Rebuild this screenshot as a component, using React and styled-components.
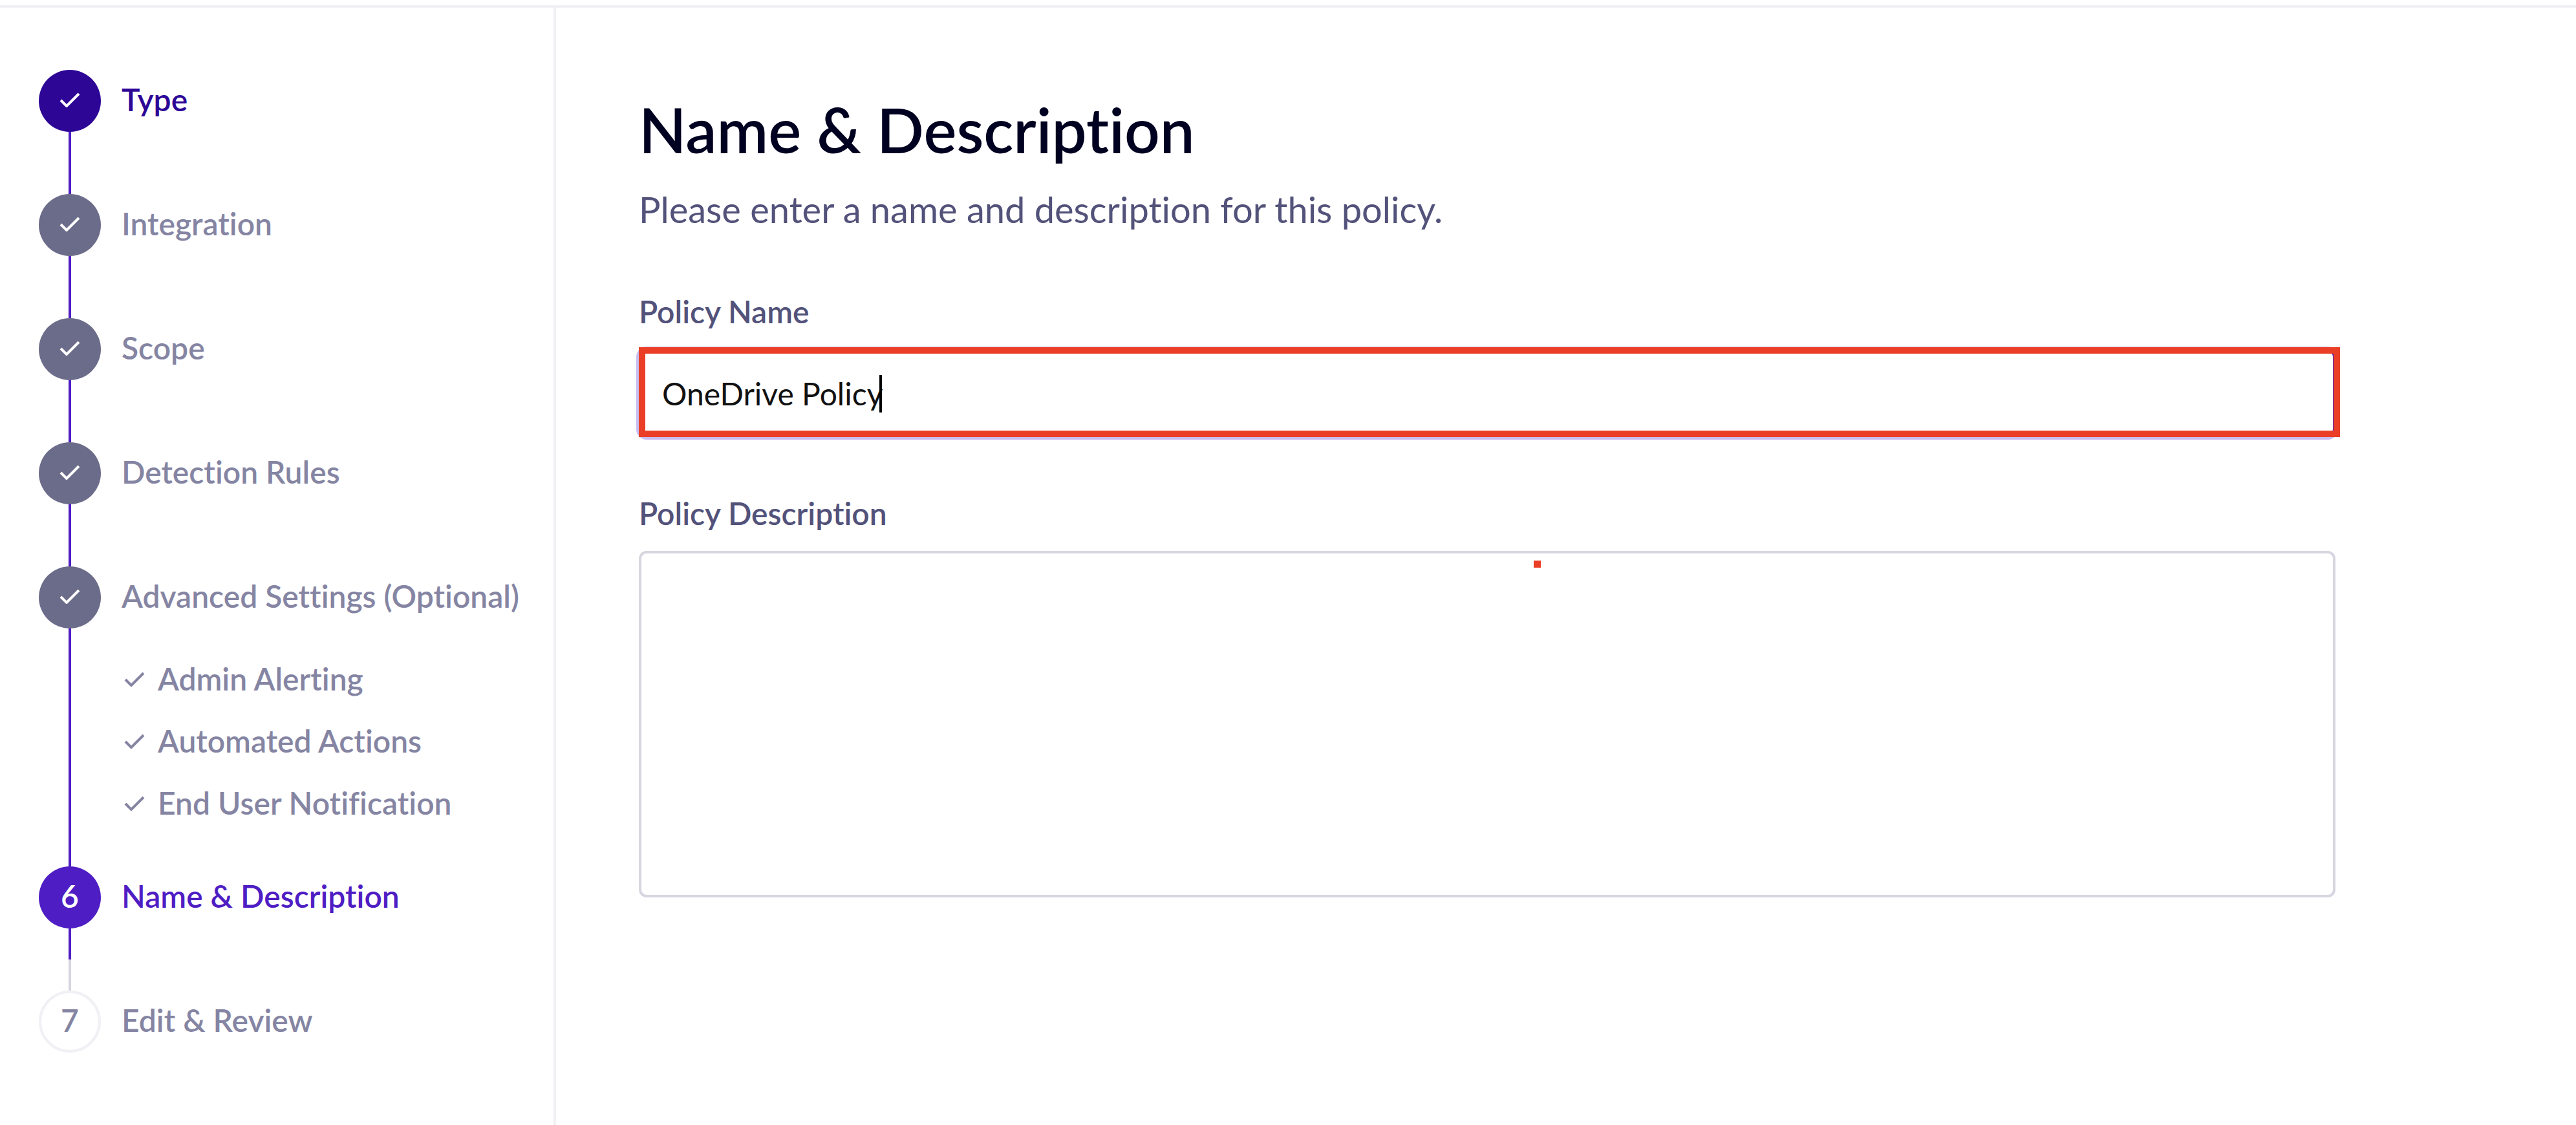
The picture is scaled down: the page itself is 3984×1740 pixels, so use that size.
import React, { useState } from "react";
import styled, { createGlobalStyle, css } from "styled-components";

const GlobalStyle = createGlobalStyle`
  *, *::before, *::after { box-sizing: border-box; }
  body {
    margin: 0;
    background: #ffffff;
    color: #000020;
    font-family: Lato, "Open Sans", sans-serif;
    font-variant-ligatures: none;
    -webkit-font-smoothing: antialiased;
  }
`;

const Page = styled.div`
  display: flex;
  flex-direction: column;
  min-height: 100vh;
  padding-top: 8px;
`;

const Wizard = styled.div`
  display: flex;
  flex: 1;
  border-top: 4px solid #f0f0f5;
`;

const Sidebar = styled.nav`
  flex: none;
  width: 860px;
  padding: 96px 0 96px 60px;
  border-right: 4px solid #f0f0f5;
`;

const StepList = styled.ol`
  margin: 0;
  padding: 0;
  list-style: none;
`;

const Step = styled.li`
  display: flex;
  gap: 32px;
`;

const Rail = styled.div`
  display: flex;
  flex: none;
  flex-direction: column;
  align-items: center;
  width: 96px;
`;

const tones = {
  first: css`background: #2d0696; color: #ffffff;`,
  done: css`background: #6b6b8a; color: #ffffff;`,
  current: css`background: #4f1dc4; color: #ffffff;`,
  upcoming: css`background: #ffffff; color: #8585a3; border: 4px solid #f0f0f5;`,
};

const Marker = styled.span`
  display: flex;
  flex: none;
  align-items: center;
  justify-content: center;
  width: 96px;
  height: 96px;
  padding-bottom: 4px;
  border-radius: 50%;
  font-size: 48px;
  font-weight: 600;
  line-height: 60px;
  ${({ $tone }) => tones[$tone]}
`;

const Connector = styled.span`
  flex: 1;
  width: 4px;
  min-height: 96px;
  background: ${({ $half }) =>
    $half ? "linear-gradient(#4f1dc4 50%, #d6d6e0 50%)" : "#4f1dc4"};
`;

const labelColors = {
  first: "#2d0696",
  done: "#8585a3",
  current: "#4f1dc4",
  upcoming: "#8585a3",
};

const StepLink = styled.a`
  display: flex;
  align-items: center;
  height: 96px;
  padding-bottom: 4px;
  color: ${({ $tone }) => labelColors[$tone]};
  font-size: 48px;
  font-weight: 600;
  line-height: 60px;
  text-decoration: none;
  white-space: nowrap;
`;

const SubList = styled.ul`
  margin: 0;
  padding: 32px 0 48px;
  list-style: none;
`;

const SubLink = styled(StepLink)`
  gap: 20px;
  padding-left: 4px;
`;

const Icon = styled.svg`
  flex: none;
  width: 32px;
  height: 24px;
`;

const Main = styled.main`
  flex: 1;
  padding: 128px;
`;

const Form = styled.form`
  max-width: 2624px;
`;

const Title = styled.h1`
  margin: 0;
  font-size: 96px;
  font-weight: 600;
  line-height: 120px;
`;

const Intro = styled.p`
  margin: 24px 0 0;
  color: #52527a;
  font-size: 56px;
  line-height: 80px;
`;

const Field = styled.div`
  display: flex;
  flex-direction: column;
  gap: 28px;
  margin-top: 88px;
`;

const Label = styled.label`
  color: #52527a;
  font-size: 48px;
  font-weight: 600;
  line-height: 60px;
`;

const Control = styled.div`
  position: relative;
  display: flex;
`;

const controlStyle = css`
  width: 100%;
  margin: 0;
  padding: 0 32px;
  border-radius: 12px;
  background: #ffffff;
  color: #111111;
  font-family: inherit;
  font-size: 48px;
  font-variant-ligatures: none;
  line-height: 60px;
  outline: none;
`;

const TextInput = styled.input`
  ${controlStyle}
  height: 136px;
  border: 4px solid #4f1dc4;
  box-shadow: 0 0 0 4px #c9bdee;
`;

const TextArea = styled.textarea`
  ${controlStyle}
  height: 536px;
  padding: 32px;
  border: 4px solid #d6d6e0;
  resize: none;
`;

const Caret = styled.span`
  position: absolute;
  top: 40px;
  left: 372px;
  width: 4px;
  height: 58px;
  background: #000000;
`;

const Highlight = styled.span`
  position: absolute;
  inset: -3px -7px 0 0;
  border: 10px solid #ea3f26;
  pointer-events: none;
`;

const Dot = styled.span`
  position: absolute;
  top: 15px;
  left: 1384px;
  width: 11px;
  height: 11px;
  background: #ea3f26;
  pointer-events: none;
`;

function Check() {
  return (
    <Icon viewBox="0 0 32 24" aria-hidden="true">
      <path
        d="M2 13 L11 22 L30 3"
        fill="none"
        stroke="currentColor"
        strokeWidth="4"
      />
    </Icon>
  );
}

const steps = [
  { label: "Type", tone: "first" },
  { label: "Integration", tone: "done" },
  { label: "Scope", tone: "done" },
  { label: "Detection Rules", tone: "done" },
  {
    label: "Advanced Settings (Optional)",
    tone: "done",
    children: ["Admin Alerting", "Automated Actions", "End User Notification"],
  },
  { label: "Name & Description", tone: "current" },
  { label: "Edit & Review", tone: "upcoming" },
];

function StepItem({ step, number, last }) {
  const { label, tone, children } = step;
  const checked = tone === "first" || tone === "done";
  return (
    <Step aria-current={tone === "current" ? "step" : undefined}>
      <Rail>
        <Marker $tone={tone}>{checked ? <Check /> : number}</Marker>
        {!last && <Connector $half={tone === "current"} />}
      </Rail>
      <div>
        <StepLink href="#" $tone={tone}>{label}</StepLink>
        {children && (
          <SubList>
            {children.map((item) => (
              <li key={item}>
                <SubLink href="#" $tone={tone}>
                  <Check />
                  {item}
                </SubLink>
              </li>
            ))}
          </SubList>
        )}
      </div>
    </Step>
  );
}

export default function App() {
  const [name, setName] = useState("OneDrive Policy");
  const [description, setDescription] = useState("");

  return (
    <>
      <GlobalStyle />
      <Page>
        <Wizard>
          <Sidebar aria-label="Policy steps">
            <StepList>
              {steps.map((step, i) => (
                <StepItem key={step.label} step={step} number={i + 1} last={i === steps.length - 1} />
              ))}
            </StepList>
          </Sidebar>
          <Main>
            <Form>
              <Title>Name &amp; Description</Title>
              <Intro>Please enter a name and description for this policy.</Intro>
              <Field>
                <Label htmlFor="policy-name">Policy Name</Label>
                <Control>
                  <TextInput id="policy-name" value={name} onChange={(e) => setName(e.target.value)} />
                  <Caret />
                  <Highlight />
                </Control>
              </Field>
              <Field>
                <Label htmlFor="policy-description">Policy Description</Label>
                <Control>
                  <TextArea
                    id="policy-description"
                    value={description}
                    onChange={(e) => setDescription(e.target.value)}
                  />
                  <Dot />
                </Control>
              </Field>
            </Form>
          </Main>
        </Wizard>
      </Page>
    </>
  );
}
